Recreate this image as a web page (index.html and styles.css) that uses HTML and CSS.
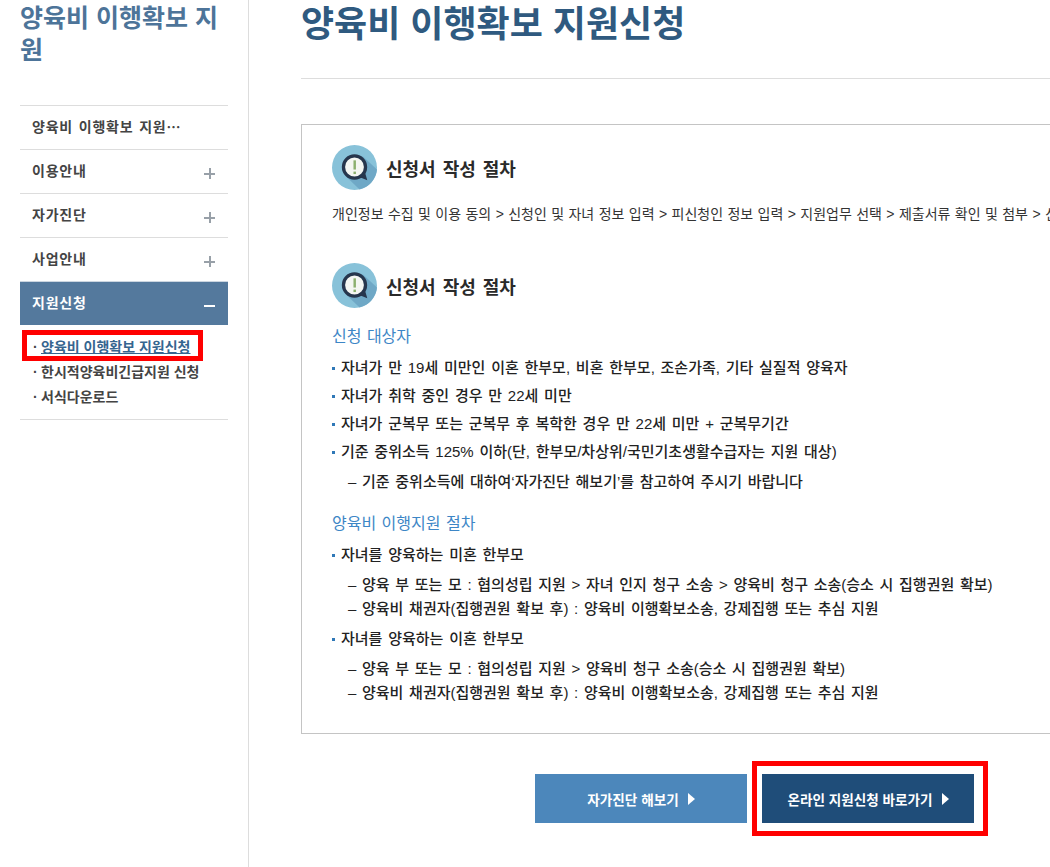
FILE: index.html
```html
<!DOCTYPE html>
<html lang="ko">
<head>
  <meta charset="UTF-8" />
  <title>양육비 이행확보 지원신청</title>
  <link rel="stylesheet" href="styles.css">
</head>
<body>
  <div class="page">
    <aside class="sidebar">
      <h2 class="side-title">양육비 이행확보 지원</h2>
      <ul class="menu">
        <li class="menu-item"><span>양육비 이행확보 지원⋯</span></li>
        <li class="menu-item"><span>이용안내</span><i class="plus"></i></li>
        <li class="menu-item"><span>자가진단</span><i class="plus"></i></li>
        <li class="menu-item"><span>사업안내</span><i class="plus"></i></li>
        <li class="menu-item active"><span>지원신청</span><i class="minus"></i></li>
      </ul>
      <ul class="submenu">
        <li class="current"><span class="dot">·</span><a href="#">양육비 이행확보 지원신청</a><b class="mark"></b></li>
        <li><span class="dot">·</span>한시적양육비긴급지원 신청</li>
        <li><span class="dot">·</span>서식다운로드</li>
      </ul>
    </aside>

    <main class="content">
      <h1 class="page-title">양육비 이행확보 지원신청</h1>

      <div class="box">
        <div class="box-head">
          <svg class="icon" viewBox="0 0 44 44">
            <circle cx="22" cy="22" r="22" fill="#88c2d9"/>
            <path d="M30 11 L44 24 A22 22 0 0 1 27 43.4 L14 31 Z" fill="#6fa8c6"/>
            <circle cx="22" cy="21.5" r="10.8" fill="#f4f6f2" stroke="#26364d" stroke-width="3.2"/>
            <path d="M26 31 L32 26 L34.5 34.5 Z" fill="#26364d"/>
            <rect x="21" y="15" width="2.4" height="9" fill="#8cb06e"/>
            <rect x="21" y="26" width="2.4" height="2.4" fill="#8cb06e"/>
          </svg>
          <h3>신청서 작성 절차</h3>
        </div>
        <p class="steps">개인정보 수집 및 이용 동의 &gt; 신청인 및 자녀 정보 입력 &gt; 피신청인 정보 입력 &gt; 지원업무 선택 &gt; 제출서류 확인 및 첨부 &gt; 신청서 제출</p>

        <div class="box-head second">
          <svg class="icon" viewBox="0 0 44 44">
            <circle cx="22" cy="22" r="22" fill="#88c2d9"/>
            <path d="M30 11 L44 24 A22 22 0 0 1 27 43.4 L14 31 Z" fill="#6fa8c6"/>
            <circle cx="22" cy="21.5" r="10.8" fill="#f4f6f2" stroke="#26364d" stroke-width="3.2"/>
            <path d="M26 31 L32 26 L34.5 34.5 Z" fill="#26364d"/>
            <rect x="21" y="15" width="2.4" height="9" fill="#8cb06e"/>
            <rect x="21" y="26" width="2.4" height="2.4" fill="#8cb06e"/>
          </svg>
          <h3>신청서 작성 절차</h3>
        </div>

        <h4 class="sub-head">신청 대상자</h4>
        <ul class="bullets">
          <li>자녀가 만 19세 미만인 이혼 한부모, 비혼 한부모, 조손가족, 기타 실질적 양육자</li>
          <li>자녀가 취학 중인 경우 만 22세 미만</li>
          <li>자녀가 군복무 또는 군복무 후 복학한 경우 만 22세 미만 + 군복무기간</li>
          <li>기준 중위소득 125% 이하(단, 한부모/차상위/국민기초생활수급자는 지원 대상)</li>
        </ul>
        <p class="dash">– 기준 중위소득에 대하여‘자가진단 해보기’를 참고하여 주시기 바랍니다</p>

        <h4 class="sub-head second">양육비 이행지원 절차</h4>
        <ul class="bullets">
          <li>자녀를 양육하는 미혼 한부모</li>
        </ul>
        <p class="dash">– 양육 부 또는 모 : 협의성립 지원 &gt; 자녀 인지 청구 소송 &gt; 양육비 청구 소송(승소 시 집행권원 확보)</p>
        <p class="dash">– 양육비 채권자(집행권원 확보 후) : 양육비 이행확보소송, 강제집행 또는 추심 지원</p>
        <ul class="bullets next">
          <li>자녀를 양육하는 이혼 한부모</li>
        </ul>
        <p class="dash">– 양육 부 또는 모 : 협의성립 지원 &gt; 양육비 청구 소송(승소 시 집행권원 확보)</p>
        <p class="dash">– 양육비 채권자(집행권원 확보 후) : 양육비 이행확보소송, 강제집행 또는 추심 지원</p>
      </div>

      <div class="actions">
        <a class="btn light" href="#">자가진단 해보기<i class="arrow"></i></a>
        <a class="btn dark" href="#">온라인 지원신청 바로가기<i class="arrow"></i><b class="mark"></b></a>
      </div>
    </main>
  </div>
</body>
</html>
```

FILE: styles.css
```css
* {
  box-sizing: border-box;
}

html, body {
  margin: 0;
  height: 867px;
  overflow: hidden;
  background: #fff;
}

body {
  font-family: "Liberation Sans", "Noto Sans CJK KR", sans-serif;
  color: #222;
}

ul {
  list-style: none;
  margin: 0;
  padding: 0;
}

.page {
  display: flex;
  height: 867px;
}

/* left column */
.sidebar {
  flex: 0 0 249px;
  padding: 0 20px;
  border-right: 1px solid #ddd;
}

.side-title {
  margin: 0 0 39px;
  padding-top: 2px;
  font-size: 25px;
  line-height: 32px;
  font-weight: 700;
  color: #4d7499;
}

.menu-item {
  display: flex;
  justify-content: space-between;
  align-items: center;
  height: 44px;
  padding: 0 13px 0 12px;
  border-top: 1px solid #ddd;
  font-size: 14px;
  font-weight: 700;
  color: #444;
  word-spacing: 1px;
  letter-spacing: 0.8px;
}

.menu-item span {
  padding-bottom: 4px;
}

.menu-item.active {
  background: #54799d;
  color: #fff;
  border-top-color: #ccd6e0;
}

.plus, .minus {
  position: relative;
  width: 11px;
  height: 11px;
  margin-top: 3px;
}

.plus::before, .minus::before {
  content: "";
  position: absolute;
  left: 0;
  top: 5px;
  width: 11px;
  height: 2px;
  background: #98a0a8;
}

.plus::after {
  content: "";
  position: absolute;
  left: 5px;
  top: 0;
  width: 2px;
  height: 11px;
  background: #98a0a8;
}

.minus::before {
  background: #fff;
}

.submenu {
  padding: 10px 0 9px 13px;
  border-bottom: 1px solid #ddd;
  font-size: 14px;
  font-weight: 700;
  color: #444;
}

.submenu li {
  position: relative;
  height: 25px;
  line-height: 25px;
  white-space: nowrap;
}

.dot {
  display: inline-block;
  width: 8px;
}

.submenu .current a {
  color: #36658f;
}

.current .mark {
  position: absolute;
  left: -11px;
  top: -5px;
  width: 181px;
  height: 31px;
  border: 5px solid #f00;
}

/* right column */
.content {
  flex: 1;
  min-width: 0;
  padding-left: 52px;
}

.page-title {
  margin: 0;
  height: 79px;
  padding-top: 3px;
  border-bottom: 1px solid #ddd;
  font-size: 36px;
  line-height: 44px;
  font-weight: 700;
  color: #2f5a80;
  white-space: nowrap;
}

.box {
  width: 900px;
  height: 610px;
  margin-top: 45px;
  padding: 20px 30px;
  border: 1px solid #c4c4c4;
  white-space: nowrap;
}

.box-head {
  display: flex;
  align-items: center;
  gap: 9px;
  height: 45px;
}

.box-head.second {
  margin-top: 39px;
}

.box-head h3 {
  margin: 0;
  font-size: 18px;
  font-weight: 700;
  color: #2a2a2a;
  word-spacing: 2px;
}

.icon {
  width: 45px;
  height: 45px;
  flex: none;
}

.steps {
  margin: 14px 0 0;
  font-size: 14px;
  line-height: 20px;
  color: #333;
  word-spacing: 0.5px;
}

.sub-head {
  margin: 18px 0 0;
  font-size: 16px;
  line-height: 22px;
  font-weight: 400;
  color: #3d86c6;
  word-spacing: 1px;
}

.sub-head.second {
  margin-top: 19px;
}

.bullets {
  margin-top: 6px;
  font-size: 15px;
  font-weight: 500;
  word-spacing: 1.6px;
  color: #222;
}

.bullets.next {
  margin-top: 4px;
}

.bullets li {
  position: relative;
  height: 28px;
  line-height: 28px;
  padding-left: 9px;
}

.bullets li::before {
  content: "";
  position: absolute;
  left: 0;
  top: 13px;
  width: 3px;
  height: 3px;
  background: #2f78b7;
}

.dash {
  margin: 0;
  height: 24px;
  padding-left: 16px;
  font-size: 15px;
  font-weight: 500;
  line-height: 24px;
  word-spacing: 1.5px;
  color: #222;
}

.bullets + .dash {
  margin-top: 4px;
}

.actions {
  display: flex;
  gap: 15px;
  margin: 40px 0 0 234px;
}

.btn {
  position: relative;
  display: flex;
  justify-content: center;
  align-items: center;
  gap: 9px;
  width: 212px;
  height: 49px;
  font-size: 13.6px;
  font-weight: 700;
  color: #fff;
  text-decoration: none;
}

.btn.light {
  background: #4c87bb;
}

.btn.dark {
  background: #1f4d79;
}

.arrow {
  width: 0;
  height: 0;
  border-left: 7px solid #fff;
  border-top: 6px solid transparent;
  border-bottom: 6px solid transparent;
}

.btn .mark {
  position: absolute;
  left: -10px;
  top: -13px;
  width: 236px;
  height: 75px;
  border: 5px solid #f00;
}
```
